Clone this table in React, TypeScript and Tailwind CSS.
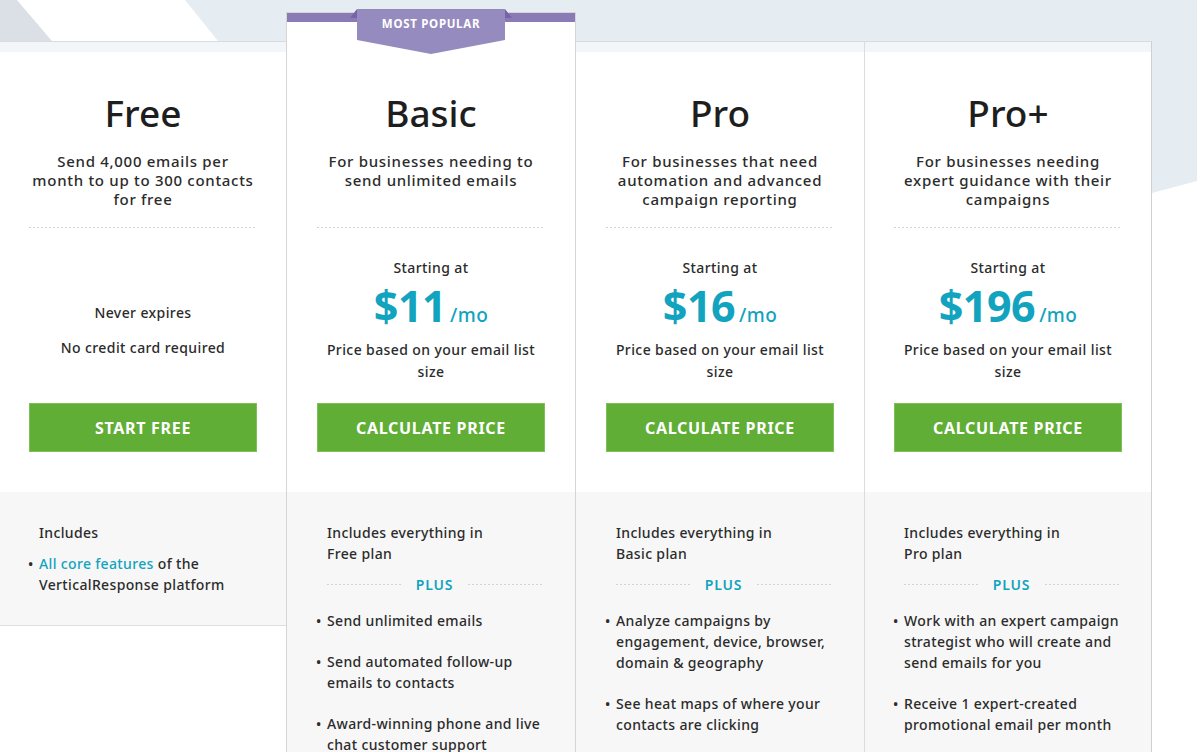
import React from 'react'

type Plan = {
  name: string
  desc: string[]
  price?: string
  button: string
  includes: string[]
  bullets: React.ReactNode[][]
  popular?: boolean
}

const plans: Plan[] = [
  {
    name: 'Free',
    desc: ['Send 4,000 emails per', 'month to up to 300 contacts', 'for free'],
    button: 'Start Free',
    includes: ['Includes'],
    bullets: [[<><span className="text-[#12a3be]">All core features</span> of the</>, 'VerticalResponse platform']],
  },
  {
    name: 'Basic',
    desc: ['For businesses needing to', 'send unlimited emails'],
    price: '$11',
    button: 'Calculate Price',
    includes: ['Includes everything in', 'Free plan'],
    bullets: [
      ['Send unlimited emails'],
      ['Send automated follow-up', 'emails to contacts'],
      ['Award-winning phone and live', 'chat customer support'],
    ],
    popular: true,
  },
  {
    name: 'Pro',
    desc: ['For businesses that need', 'automation and advanced', 'campaign reporting'],
    price: '$16',
    button: 'Calculate Price',
    includes: ['Includes everything in', 'Basic plan'],
    bullets: [
      ['Analyze campaigns by', 'engagement, device, browser,', 'domain & geography'],
      ['See heat maps of where your', 'contacts are clicking'],
    ],
  },
  {
    name: 'Pro+',
    desc: ['For businesses needing', 'expert guidance with their', 'campaigns'],
    price: '$196',
    button: 'Calculate Price',
    includes: ['Includes everything in', 'Pro plan'],
    bullets: [
      ['Work with an expert campaign', 'strategist who will create and', 'send emails for you'],
      ['Receive 1 expert-created', 'promotional email per month'],
    ],
  },
]

const dashed =
  'h-px bg-[linear-gradient(90deg,#d2d2d2_50%,transparent_50%)] bg-[length:4px_1px] bg-repeat-x'

function Ribbon() {
  return (
    <div className="absolute left-[63px] top-[-5px] w-[162px] h-[47px]">
      <svg width="162" height="47" viewBox="0 0 162 47" className="absolute inset-0">
        <polygon points="0,10 7,1 7,10" fill="#7564a6" />
        <polygon points="162,10 155,1 155,10" fill="#7564a6" />
        <polygon points="7,1 155,1 155,32 81,46 7,32" fill="#958bbf" />
      </svg>
      <div className="relative pt-[8px] text-center text-[11.5px] leading-[16px] font-bold tracking-[0.7px] text-white">
        MOST POPULAR
      </div>
    </div>
  )
}

function PlanColumn({ plan, width, border }: { plan: Plan; width: string; border: string }) {
  const isFree = !plan.price
  return (
    <div className={`relative shrink-0 ${width} ${border} ${plan.popular ? 'mt-[12px] border-t border-t-[#d5d5d5]' : 'mt-[41px] border-t border-t-[#d6dce1]'}`}>
      {plan.popular ? (
        <>
          <div className="h-[9px] bg-[#8a7bb7]" />
          <Ribbon />
          <div className="h-[70px] bg-white" />
        </>
      ) : (
        <>
          <div className="h-[10px] bg-[#f2f6f9]" />
          <div className="h-[40px] bg-white" />
        </>
      )}

      <div className="bg-white">
        <div className="w-[228px] mx-auto text-center">
          <h2 className="h-[42px] text-[37px] leading-[42px] font-medium text-[#1e1e1e]">{plan.name}</h2>
          <div className="mt-[18px] h-[57px] text-[15px] leading-[19px] tracking-[0.7px] font-medium text-[#2b2b2b]">
            {plan.desc.map((d) => (
              <div key={d}>{d}</div>
            ))}
          </div>
          <div className={`mt-[18px] ${dashed}`} />
          {isFree ? (
            <div className="h-[175px] pt-[75px] text-[14px] leading-[20px] tracking-[0.4px] font-medium text-[#2b2b2b]">
              <div>Never expires</div>
              <div className="mt-[15px]">No credit card required</div>
            </div>
          ) : (
            <div className="h-[175px] pt-[31px] text-[14px] tracking-[0.4px] font-medium text-[#2b2b2b]">
              <div className="leading-[18px]">Starting at</div>
              <div className="mt-[6px] h-[46px] flex items-baseline justify-center text-[#12a3be]">
                <span className="text-[43px] leading-[46px] font-bold tracking-[-0.5px]">{plan.price}</span>
                <span className="ml-[4px] text-[19px] font-medium">/mo</span>
              </div>
              <div className="mt-[10px] leading-[22px]">
                Price based on your email list
                <br />
                size
              </div>
            </div>
          )}
          <button className="w-[228px] h-[49px] bg-[#60ae35] border border-[#7cc156] text-white text-[16px] font-bold uppercase tracking-[0.7px]">
            {plan.button}
          </button>
          <div className="h-[40px]" />
        </div>
      </div>

      <div className={`bg-[#f7f7f7] pt-[30px] ${isFree ? 'pb-[30px] border-b border-b-[#dedede]' : 'h-[400px]'}`}>
        <div className="w-[228px] mx-auto text-[14px] leading-[21px] tracking-[0.35px] font-medium text-[#2b2b2b]">
          <div className="pl-[10px]">
            {plan.includes.map((l) => (
              <div key={l}>{l}</div>
            ))}
          </div>
          {!isFree && (
            <div className="mt-[10px] pl-[10px] pr-[3px] flex items-center gap-[15px]">
              <div className={`flex-1 ${dashed}`} />
              <span className="text-[#12a3be] font-semibold tracking-[0.8px]">PLUS</span>
              <div className={`flex-1 ${dashed}`} />
            </div>
          )}
          <div className={`${isFree ? 'mt-[10px]' : 'mt-[15px]'} flex flex-col gap-[20px]`}>
            {plan.bullets.map((lines, i) => (
              <div key={i} className="flex">
                <span className="w-[10px] -ml-[1px] mr-[1px] shrink-0 text-[14px] leading-[21px]">•</span>
                <div>
                  {lines.map((l, j) => (
                    <div key={j}>{l}</div>
                  ))}
                </div>
              </div>
            ))}
          </div>
        </div>
      </div>
    </div>
  )
}

export default function App() {
  return (
    <div className="relative w-[1197px] h-[752px] overflow-hidden bg-white font-['Noto_Sans',sans-serif]">
      {/* background band */}
      <svg className="absolute inset-x-0 top-0" width="1197" height="200" viewBox="0 0 1197 200">
        <polygon points="0,0 1197,0 1197,181 1152,193 0,193" fill="#e5ecf2" />
        <polygon points="0,0 17,0 52,41 0,41" fill="#dbe0e7" />
        <polygon points="17,0 185,0 218,41 52,41" fill="#ffffff" />
      </svg>

      <div className="relative flex items-start">
        <PlanColumn plan={plans[0]} width="w-[286px]" border="" />
        <PlanColumn plan={plans[1]} width="w-[290px]" border="border-x border-x-[#d5d5d5]" />
        <PlanColumn plan={plans[2]} width="w-[289px]" border="border-r border-r-[#dcdcdc]" />
        <PlanColumn plan={plans[3]} width="w-[287px]" border="border-r border-r-[#d0d0d0]" />
      </div>
    </div>
  )
}
